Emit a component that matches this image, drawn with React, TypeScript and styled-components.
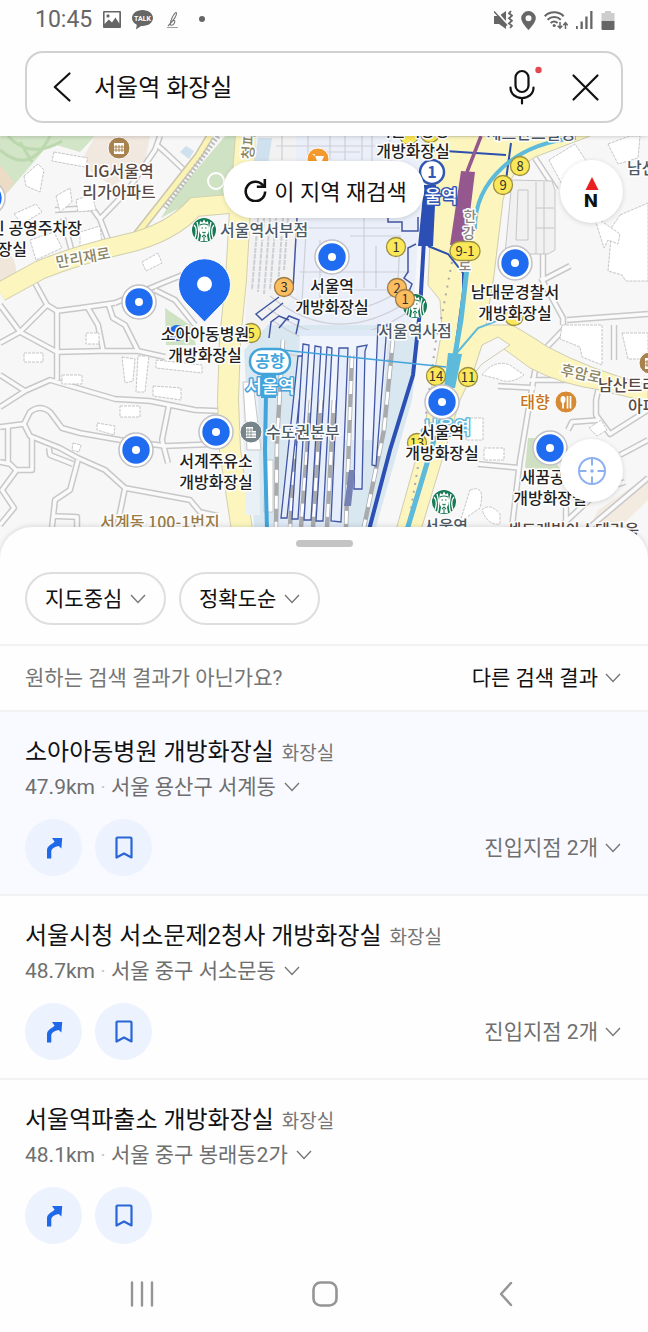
import React from "react";
import styled, { createGlobalStyle } from "styled-components";

const GlobalStyle = createGlobalStyle`
  *, *::before, *::after { box-sizing: border-box; }
  body {
    margin: 0;
    background: #fff;
    color: #111;
    font-family: Roboto, "Noto Sans CJK KR", sans-serif;
  }
  button, input, select { font: inherit; color: inherit; }
  button { margin: 0; padding: 0; border: 0; background: none; cursor: pointer; }
  h2, p, ul { margin: 0; padding: 0; font-weight: 400; }
  svg { display: block; flex: none; }
`;

const Page = styled.div`
  min-height: 100vh;
  display: flex;
  flex-direction: column;
  background: #fefefe;
`;

/* ---------- status bar ---------- */

const StatusBar = styled.div`
  display: flex;
  align-items: center;
  justify-content: space-between;
  height: 40px;
  padding: 0 33px 0 35px;
  color: #666;
`;

const StatusGroup = styled.div<{ $gap: number }>`
  display: flex;
  align-items: center;
  gap: ${(p) => p.$gap}px;
`;

const Clock = styled.span`
  font-size: 23px;
  line-height: 40px;
`;

/* ---------- search ---------- */

const SearchArea = styled.form`
  position: relative;
  z-index: 1;
  padding: 11px 25px 13px;
  background: #fefefe;
  box-shadow: 0 1px 4px rgba(0, 0, 0, 0.16);
  clip-path: inset(0 0 -6px 0);
`;

const SearchBox = styled.div`
  display: flex;
  align-items: center;
  height: 72px;
  padding: 0 18px 0 17px;
  border: 2px solid #d1d1d1;
  border-radius: 18px;
`;

const IconButton = styled.button`
  display: grid;
  place-items: center;
  width: 36px;
  height: 48px;

  svg { overflow: visible; }
`;

const SearchInput = styled.input`
  flex: 1;
  min-width: 0;
  height: 48px;
  margin: 0 14px;
  padding: 0 0 3px;
  border: 0;
  outline: 0;
  background: none;
  font-size: 24px;
`;

const SearchActions = styled.div`
  display: flex;
  gap: 27px;
`;

/* ---------- map ---------- */

const MapArea = styled.section`
  position: relative;
  height: 420px;
  overflow: hidden;
  background: #f7f7f7;
`;

const MapDrawing = styled.svg`
  width: 100%;
  height: 100%;
  font-family: "Noto Sans CJK KR", sans-serif;
`;

const ResearchButton = styled.button`
  position: absolute;
  top: 25px;
  left: 50%;
  transform: translateX(-50%);
  display: flex;
  align-items: center;
  justify-content: center;
  gap: 7px;
  height: 57px;
  padding: 0 18px 0 20px;
  border-radius: 29px;
  background: #fff;
  box-shadow: 0 1px 5px rgba(0, 0, 0, 0.15);
  font-size: 22px;
  white-space: nowrap;
`;

const RoundMapButton = styled.button<{ $top: number }>`
  position: absolute;
  top: ${(p) => p.$top}px;
  right: 25px;
  display: grid;
  place-items: center;
  width: 63px;
  height: 63px;
  border-radius: 50%;
  background: #fff;
  box-shadow: 0 1px 5px rgba(0, 0, 0, 0.15);
`;

/* ---------- result sheet ---------- */

const Sheet = styled.main`
  position: relative;
  flex: 1;
  margin-top: -29px;
  padding-top: 13px;
  border-radius: 32px 32px 0 0;
  background: #fefefe;
  box-shadow: 0 -1px 5px rgba(0, 0, 0, 0.12);
`;

const Handle = styled.div`
  width: 57px;
  height: 7px;
  margin: 0 auto;
  border-radius: 4px;
  background: #c4c4c4;
`;

const Filters = styled.div`
  display: flex;
  gap: 13px;
  padding: 25px 25px 19px;
  border-bottom: 2px solid #f2f2f3;
`;

const Chip = styled.label`
  display: flex;
  align-items: center;
  gap: 7px;
  height: 53px;
  padding: 0 18px;
  border: 2px solid #dedede;
  border-radius: 27px;
  font-size: 21px;
`;

const ChipSelect = styled.select`
  appearance: none;
  margin: 0;
  padding: 0;
  border: 0;
  outline: 0;
  background: none;
  line-height: 32px;
`;

const OtherResults = styled.div`
  display: flex;
  align-items: center;
  justify-content: space-between;
  height: 66px;
  padding: 0 27px 0 25px;
  border-bottom: 2px solid #f1f2f4;
  color: #757575;
  font-size: 21px;
  line-height: 32px;
`;

const MoreButton = styled.button<{ $dark?: boolean }>`
  display: flex;
  align-items: center;
  gap: 7px;
  color: ${(p) => (p.$dark ? "#111" : "#6f6f6f")};
  font-size: 21px;
  line-height: 32px;
`;

const List = styled.ul`
  list-style: none;
`;

const Item = styled.li<{ $active?: boolean }>`
  padding: 24px 27px 18px 25px;
  border-bottom: 2px solid #f1f2f4;
  background: ${(p) => (p.$active ? "#f9faff" : "transparent")};

  &:last-child {
    padding-bottom: 12px;
    border-bottom: 0;
  }
`;

const ItemHead = styled.div`
  display: flex;
  align-items: baseline;
  gap: 8px;
`;

const Title = styled.h2`
  font-size: 24px;
  line-height: 32px;
`;

const Category = styled.span`
  color: #757575;
  font-size: 19px;
`;

const Address = styled.button`
  display: flex;
  align-items: center;
  gap: 8px;
  margin-top: 4px;
  color: #6f6f6f;
  font-size: 21px;
  line-height: 30px;
`;

const Separator = styled.span`
  color: #c8c8c8;
`;

const ItemActions = styled.div`
  display: flex;
  align-items: center;
  gap: 13px;
  margin-top: 17px;
`;

const RoundAction = styled.button`
  display: grid;
  place-items: center;
  width: 57px;
  height: 57px;
  border-radius: 50%;
  background: #edf2ff;
`;

const Entrances = styled.div`
  margin-left: auto;
`;

const NavBar = styled.nav`
  position: relative;
  display: flex;
  align-items: center;
  justify-content: space-between;
  height: 76px;
  padding: 0 20%;
  background: #fefefe;
`;

const NavButton = styled.button`
  display: grid;
  place-items: center;
  width: 24px;
  height: 48px;
`;

/* ---------- icons ---------- */

const Chevron = ({ color = "#777" }: { color?: string }) => (
  <svg width="16" height="10" viewBox="0 0 16 10" fill="none" stroke={color} strokeWidth="1.4" aria-hidden="true">
    <path d="M1 1l7 7.4L15 1" />
  </svg>
);

const StatusLeft = () => (
  <StatusGroup $gap={10}>
    <Clock>10:45</Clock>
    <svg width="20" height="18" viewBox="0 0 20 18" fill="#666">
      <path
        fillRule="evenodd"
        d="M2 0h16a1 1 0 0 1 1 1v15a1 1 0 0 1-1 1H2a1 1 0 0 1-1-1V1a1 1 0 0 1 1-1zm.6 1.600v11.400l4.200-4.600 3.200 3.100 3.400-5 3.900 6V1.600zM6 3.300a1.600 1.600 0 1 1 0 3.200 1.600 1.600 0 0 1 0-3.200z"
      />
    </svg>
    <svg width="21" height="20" viewBox="0 0 21 20">
      <path d="M10.500 0C4.700 0 0 3.600 0 8c0 2.900 1.900 5.300 4.800 6.700L4 19.500l5-3.600 1.500.1C16.300 16 21 12.400 21 8s-4.700-8-10.500-8z" fill="#666" />
      <text x="10.500" y="11" fontSize="7" fontWeight="700" fontFamily="Roboto, sans-serif" fill="#fff" textAnchor="middle">
        TALK
      </text>
    </svg>
    <svg width="20" height="20" viewBox="0 0 20 20" fill="none" stroke="#777" strokeWidth="1.100">
      <path d="M5 16C9 12 14 6 13.500 3c-.6-1.700-3 1.500-4.500 5-1.200 3-2.600 6.600-1 7.200 1.800.6 4-2 3.800-4-.2-1.300-2-.8-3 .8" />
      <path d="M4 17.500h11" strokeWidth=".7" />
    </svg>
    <svg width="20" height="8" viewBox="0 0 20 8">
      <circle cx="9" cy="3" r="3" fill="#666" />
    </svg>
  </StatusGroup>
);

const StatusRight = () => (
  <StatusGroup $gap={8}>
    <svg width="19" height="20" viewBox="0 0 19 20" fill="none">
      <path d="M0 6h5l7-5v18l-7-5H0z" fill="#666" />
      <path d="M1 0l13 15" stroke="#fefefe" strokeWidth="2" />
      <path d="M0 1.500l13 14" stroke="#666" strokeWidth="1.500" />
      <path d="M17 1l-2 2.300 3 2.400-3 2.600 3 2.500-3 2.600 3 2.400-2 2.200" stroke="#666" strokeWidth="1.800" />
    </svg>
    <svg width="15" height="19" viewBox="0 0 15 19">
      <path fillRule="evenodd" d="M7.500 0A7.300 7.300 0 0 0 .2 7.300C.2 12 7.500 19 7.500 19s7.300-7 7.300-11.700A7.300 7.300 0 0 0 7.500 0zm0 4.200a3 3 0 1 1 0 6 3 3 0 0 1 0-6z" fill="#666" />
    </svg>
    <svg width="24" height="19" viewBox="0 0 24 19" fill="none" stroke="#666" strokeWidth="2">
      <path d="M.7 5.200a13.500 13.500 0 0 1 19 0M3.600 8.700a9.500 9.500 0 0 1 13.200 0M6.600 12a5.500 5.500 0 0 1 7 0" />
      <circle cx="10.200" cy="14.500" r="1.600" fill="#666" stroke="none" />
      <path d="M16 11v6M13.700 14.700l2.300 2.500 2.300-2.500M21.500 18v-6M19.300 14.200l2.200-2.500 2.200 2.500" strokeWidth="1.500" />
    </svg>
    <svg width="17" height="18" viewBox="0 0 17 18" fill="#666">
      <path d="M0 15h1.800v3H0zM4.500 10.500h2.300V18H4.500zM9.300 5.500h2.300V18H9.300zM14.200 0h2.300v18h-2.300z" />
    </svg>
    <svg width="14" height="19" viewBox="0 0 14 19">
      <path d="M4 0h6v2h3.500v8H.5V2H4z" fill="#cdcdcd" />
      <path d="M.5 10h13v8a1 1 0 0 1-1 1h-11a1 1 0 0 1-1-1z" fill="#666" />
    </svg>
  </StatusGroup>
);

const RouteIcon = () => (
  <svg width="18" height="22" viewBox="0 0 18 22" aria-hidden="true">
    <path d="M7 1H17.200L16.400 11.500 13.700 9C11.500 9.500 6.300 11 6.300 14.300V21.500H2V13.500C2 9.500 5.500 8 9.600 4.800z" fill="#1f68e8" />
  </svg>
);

const BookmarkIcon = () => (
  <svg width="18" height="23" viewBox="0 0 18 23" fill="none" stroke="#2a66d4" strokeWidth="2.200" strokeLinejoin="round" aria-hidden="true">
    <path d="M1.500 2.500a1 1 0 0 1 1-1h13a1 1 0 0 1 1 1v19L9 17.500l-7.500 4z" />
  </svg>
);

/* ---------- map drawing ---------- */

const STREETS = [
  "M0 375L25 391L0 407M25 391L50 380L115 399L150 401L170 405L195 410L218 411",
  "M57 380V311M0 343L20 332L57 352L100 351L138 351L165 357M20 332L0 305",
  "M35 283L47 305L57 311L80 308L115 303M47 305L20 332M88 308L98 325L103 350M108 303L113 318L125 325L138 351",
  "M115 303L165 282L195 270M155 290L175 300L195 325",
  "M0 427L24 424L30 412Q40 404 50 412L62 428L80 433L120 440L165 446L218 444",
  "M24 424L30 436L60 448L78 458L105 470L125 488L190 500L200 512L218 516M125 488L117 527",
  "M169 405L162 440L168 463M78 460L70 490L55 500L52 527M52 516L77 517V527M49 448L50 455L73 464",
  "M8 427V463M0 462L10 464L16 470L32 470V437M16 471L2 490L14 508L0 525",
  "M55 210L92 208L100 219L128 190L155 150L160 136M100 219L110 245M63 218L72 252",
  "M157 145L165 152L183 169",
  "M535 158L556 190M543 278V250M543 280L570 266M567 320L648 314M541 278L563 318V325",
  "M536 365L530 400L520 460L512 527M530 380L600 380M498 386L535 388M478 464L520 468",
  "M614 325V360M600 382L596 400V415L610 434L648 410M568 430L572 422L600 420",
  "M568 325L546 348M648 440L620 455M590 527L648 478M560 527L600 490L625 482M566 500V527",
];

const BUILDINGS = [
  "M54 152l34 6-3 9-33-6z",
  "M24 176l14-12 6 6-4 22-14-6z",
  "M56 196l14-8 2 14-12 10z",
  "M14 214l22-10 6 8-20 12z",
  "M76 200l16-6 4 16-18 2z",
  "M30 240l24-8 8 16-26 12z",
  "M80 232l20-6 2 18-22 6z",
  "M142 262l16-9 4 10-16 8z",
  "M86 333h13v11H86z",
  "M24 353h19v9H24z",
  "M122 357l13 2-2 22-8 2z",
  "M138 356h11l-4 36h-9z",
  "M156 360l46 5v8l-46-5z",
  "M153 386l28 2v12l-28-4z",
  "M120 406h20v11h-20z",
  "M97 423l18 3-1 9-17-5z",
  "M62 375h20v9H62z",
  "M73 443l8 2-2 7-7-2z",
  "M608 144l22-8h10l-2 22-20 6z",
  "M549 160l26-16 20 30-30 16z",
  "M620 215l28-12v78h-22l-4-6-14-4 4-44z",
  "M594 216l26 18-2 10-10-4-4 8z",
  "M562 325h40v40l-20-8-2-10-20-8z",
  "M622 333h26v26h-20z",
  "M482 375q12-16 28-10l14 10q-14 10-26 4z",
  "M484 448h20v12h-20z",
  "M466 418h17v22h-17z",
  "M482 510q8-8 18 4l0 10q-12 2-18-14z",
  "M470 490q16-6 10 18l-20 14z",
  "M589 428l12-8 6 10-10 6z",
];

const PLATFORMS = [
  "M298 356h6L287 518h-6z",
  "M303 344l6 1-11 174h-6z",
  "M315 346l6 1-10 173h-7z",
  "M327 347l5 1-9 173h-7z",
  "M339 348h9l-7 174-10-1z",
  "M357 347l10-2-2 6-3 138h-8z",
  "M378 325h9l-11 141-4-1z",
];

const TRACKS = [
  "M283 340L277 440L276 527",
  "M297 420L290 527",
  "M311 400L301 527",
  "M321 400L313 527",
  "M334 400L327 527",
  "M352 355L346 527",
  "M393 340L384 430L364 527",
];

type LabelProps = {
  x: number;
  y: number;
  color?: string;
  size?: number;
  anchor?: "start" | "middle" | "end";
  halo?: string;
  rotate?: number;
  children: React.ReactNode;
};

const MapLabel = ({ x, y, color = "#222", size = 16, anchor = "middle", halo = "#fff", rotate = 0, children }: LabelProps) => (
  <text
    x={x}
    y={y}
    fill={color}
    fontSize={size}
    fontWeight={500}
    textAnchor={anchor}
    stroke={halo}
    strokeWidth="3"
    strokeLinejoin="round"
    paintOrder="stroke"
    transform={rotate ? `rotate(${rotate} ${x} ${y})` : undefined}
  >
    {children}
  </text>
);

const Spot = ({ x, y }: { x: number; y: number }) => (
  <g>
    <circle cx={x} cy={y} r="17" fill="#fff" stroke="#c2c2c6" strokeWidth="1.500" />
    <circle cx={x} cy={y} r="13.700" fill="#206cf0" />
    <circle cx={x} cy={y} r="4" fill="#fff" />
  </g>
);

const Exit = ({ x, y, n, orange, wide }: { x: number; y: number; n?: string; orange?: boolean; wide?: boolean }) => (
  <g>
    <rect
      x={x - (wide ? 15 : 9.5)}
      y={y - 9.5}
      width={wide ? 30 : 19}
      height="19"
      rx="9.500"
      fill={orange ? "#fbbd5e" : "#fbe858"}
      stroke={orange ? "#9c7a48" : "#9c9040"}
      strokeWidth="1.300"
    />
    {n && (
      <text x={x} y={y + 5} fontSize="13" fill="#333" textAnchor="middle">
        {n}
      </text>
    )}
  </g>
);

const Coffee = ({ x, y }: { x: number; y: number }) => (
  <g transform={`translate(${x} ${y})`}>
    <circle r="12.500" fill="#fff" />
    <circle r="12" fill="#187a55" />
    <path d="M-9 8Q-6-1-10-5M-6.500 10Q-4 2-7-8M9 8Q6-1 10-5M6.500 10Q4 2 7-8" fill="none" stroke="#fff" strokeWidth="1.300" />
    <path d="M-4.500-5L-4-9-1.800-7.500 0-10.500 1.800-7.500 4-9 4.500-5Q6 1 3 5L4 11H-4L-3 5Q-6 1-4.500-5z" fill="#fff" />
    <path d="M-2.500-2h1.500M1-2h1.500M-1.500 2Q0 3.500 1.500 2M-2 7L0 5 2 7M-4-5Q0-7 4-5M0 7v4" fill="none" stroke="#187a55" strokeWidth="1.100" />
  </g>
);

const Place = ({ x, y, r, fill, children }: { x: number; y: number; r: number; fill: string; children?: React.ReactNode }) => (
  <g transform={`translate(${x} ${y})`}>
    <circle r={r} fill={fill} stroke="#fff" strokeWidth="1" />
    {children}
  </g>
);

const Building = () => (
  <>
    <path d="M-5-5H5V6H-5z" fill="#fff" />
    <path d="M-3-3v7M0-3v7M3-3v7M-5-1H5M-5 2H5" stroke="#a8834f" strokeWidth="1" />
  </>
);

const CityMap = () => (
  <MapDrawing viewBox="0 136 648 420" preserveAspectRatio="xMidYMin slice" role="img" aria-label="서울역 주변 지도">
    <rect y="136" width="648" height="420" fill="#f7f7f7" />

    <path d="M0 136H95L80 152 53 144 44 150 8 192 0 188z" fill="#d2e5c6" />
    <path d="M0 165L14 182 5 196 0 192z" fill="#ecdcc5" />
    <path d="M8 136Q30 160 62 141M0 150Q30 176 50 136M20 142l12 20" fill="none" stroke="#bcd8ae" strokeWidth="3" />
    <path d="M95 136H150L144 168 112 186 80 164z" fill="#f1e8df" />
    <path d="M0 246Q18 256 16 276L0 285z" fill="#f0e6da" />
    <path d="M237 136V200L207 197Q185 204 161 218L176 194 225 136z" fill="#cfe2c4" />
    <path d="M165 308L190 325 196 345H166z" fill="#cfe2c4" />
    <path d="M180 152l6-6 8 5-5 8z" fill="#cfe0ef" />
    <path d="M528 438H545L560 470 525 468z" fill="#cfe0c2" />
    <path d="M598 510L648 476V500L620 527H590z" fill="#f3ebe0" />

    <g fill="none" strokeLinejoin="round">
      {STREETS.map((d) => (
        <path key={d} d={d} stroke="#c8c8ca" strokeWidth="6.500" />
      ))}
      {STREETS.map((d) => (
        <path key={d} d={d} stroke="#fafafa" strokeWidth="3.500" />
      ))}
    </g>
    <g fill="#fff" stroke="#c6c6c8" strokeWidth="1" strokeDasharray="3 1">
      {BUILDINGS.map((d) => (
        <path key={d} d={d} />
      ))}
    </g>
    <g fill="#f1f1f2" stroke="#c6c6c8" strokeWidth="1">
      <path d="M512 180L552 181 555 190V250L548 254H505z" />
      <path d="M518 190h10v50h-12zM536 182v72M544 182v72M536 208h18M536 228h18" />
    </g>

    {/* minor and major yellow roads */}
    <g fill="none">
      <path d="M132 240L198 156 210 136" stroke="#c9c6ad" strokeWidth="8" />
      <path d="M132 240L198 156 210 136" stroke="#fbf3b4" strokeWidth="5" />
      <path d="M218 136L165 208" stroke="#bdbdbd" strokeWidth="5" strokeDasharray="2 2" />
      <path d="M0 292L40 270Q80 254 125 244T195 207L240 203" stroke="#d2cfae" strokeWidth="20" />
      <path d="M246 136L240 210 236 280 230 340 228 400 230 450 242 530" stroke="#d2cfae" strokeWidth="22" />
      <path d="M0 292L40 270Q80 254 125 244T195 207L240 203" stroke="#fcf6be" strokeWidth="18" />
      <path d="M246 136L240 210 236 280 230 340 228 400 230 450 242 530" stroke="#fcf6be" strokeWidth="20" />
    </g>

    {/* station yard */}
    <path d="M256 136H300V320L262 345H244L250 240z" fill="#f2f2f3" />
    <path d="M258 138h14l-4 26h-14z" fill="#cfe0ef" />
    <path d="M296 136H425L412 330H264L296 296z" fill="#ebeff9" />
    <path d="M244 350L268 325H440L424 400 380 527H254z" fill="#d9e7f1" />
    <path d="M425 290L440 330 430 400 396 527H376L412 400z" fill="#f7f7f7" />
    <g fill="none" stroke="#cdcfd6" strokeWidth="1.200">
      <path d="M258 218L252 290M264 218L258 292M270 218L264 294M276 218L270 290M283 218L278 285M288 218L284 270" strokeWidth="2" strokeDasharray="5 1" />
      <path d="M282 136v24M308 136v24M330 136v24M345 136v24M362 136v24M276 146h99M372 136v26M390 140v24M310 152h50" />
      <path d="M300 228h100M306 232l-4 70M320 240v60M350 236h50l-3 70M364 218v70M376 246v42M300 272h110M312 290h94" />
      <path d="M270 296Q336 350 410 300M268 308Q336 360 408 312M272 320Q336 368 404 322M285 292Q336 330 398 292" />
      <path d="M266 350l32 6 94 4" strokeWidth="1.500" />
    </g>
    <path d="M300 330H392L370 420 345 527H278z" fill="#dfe9f7" />
    <path d="M300 336L388 336 380 440 296 440z" fill="#f0f4fd" />

    <g fill="none">
      {TRACKS.map((d) => (
        <path key={d} d={d} stroke="#a9aaac" strokeWidth="4.500" />
      ))}
      {TRACKS.map((d) => (
        <path key={d} d={d} stroke="#fff" strokeWidth="3" strokeDasharray="13 13" />
      ))}
    </g>
    <g fill="#e6eefb" stroke="#4256a2" strokeWidth="1.300">
      {PLATFORMS.map((d) => (
        <path key={d} d={d} />
      ))}
      <path d="M349 470h6l-4 36h-7z" fill="#7481b2" stroke="none" />
    </g>
    <g fill="none" stroke="#4256a2" strokeWidth="1.500">
      <path d="M297 218L293 290M279 297L256 314 262 320 283 303M269 338l2-16 8-6 10 4M279 328l10-12 10 4-3 14" />
      <path d="M388 218v4h14v9h16v-14M416 244l-8 4v24l-4 6 8 6-8 20" />
    </g>
    <path d="M242 385h16l2 130h-14z" fill="#e9f0f6" />
    <path d="M243 382h10l8 68h-14zM265 460h8v52h-9z" fill="#fff" stroke="#c6c6c8" />

    {/* wide road on the east side */}
    <path
      d="M425 136H590L535 157Q508 172 503 200L494 275 486 325H512Q535 338 546 346 590 370 648 385V402L600 390Q560 384 530 368L500 346 480 358 460 400 421 530H396L424 430 442 330 440 300 428 285 430 240z"
      fill="#fcf6be"
      stroke="#cfccb0"
      strokeWidth="1"
    />
    <path d="M482 345L498 337 510 345 482 364 472 376z" fill="#f7f7f7" stroke="#cfccb0" />
    <path d="M452 262L441 320 436 340 424 430 408 527" fill="none" stroke="#aaa" strokeWidth="2" strokeDasharray="2 6" />

    {/* subway lines */}
    <g fill="none">
      <path d="M430 150L506 155M511 143L506 180M428 246L448 254 463 273V292L455 350" stroke="#2d4fae" strokeWidth="2" />
      <path d="M424 240L420 310 413 375 390 450 369 530" stroke="#2b4fb4" strokeWidth="4" />
      <path d="M576 138Q530 142 502 168T475 230" stroke="#5dbadb" strokeWidth="4" />
      <path d="M467 268L461 320 455 355M448 400L434 440 407 530" stroke="#5dbadb" strokeWidth="5" />
      <path d="M455 355L478 328 512 315" stroke="#5dbadb" strokeWidth="2" />
      <path d="M282 350L446 367" stroke="#42a4db" strokeWidth="1.500" />
      <path d="M266 395L265 450 267 530" stroke="#42a4db" strokeWidth="4" />
      <path d="M481 136L467 172" stroke="#94588e" strokeWidth="3.500" />
    </g>
    <path d="M461 171L475 172 466 245H450z" fill="#94588e" />
    <path d="M424 185H436L433 246H418z" fill="#2b4fb4" />
    <path d="M448 353L462 354 455 388H444z" fill="#5dbadb" />
    <path d="M261 372H276V398H261z" fill="#42a4db" />

    <circle cx="216" cy="181" r="8" fill="none" stroke="#fff" strokeWidth="2" />

    {/* street names */}
    <MapLabel x={84} y={263} size={15} color="#8d8664" rotate={-10}>만리재로</MapLabel>
    <MapLabel x={580} y={379} size={15} color="#8d8664" rotate={12}>후암로</MapLabel>
    <MapLabel x={470} y={221} size={14} color="#8d8680">한</MapLabel>
    <MapLabel x={469} y={238} size={14} color="#8d8680">강</MapLabel>
    <MapLabel x={465} y={270} size={14} color="#8d8680">로</MapLabel>
    <MapLabel x={254} y={146} size={15} color="#8d8664" rotate={-86}>청파</MapLabel>

    {/* exits */}
    <Exit x={409} y={135} />
    <Exit x={430} y={133} />
    <Exit x={520} y={166} n="8" />
    <Exit x={503} y={185} n="9" />
    <Exit x={465} y={251} n="9-1" wide />
    <Exit x={396} y={247} n="1" />
    <Exit x={436} y={376} n="14" />
    <Exit x={468} y={377} n="11" />
    <Exit x={251} y={333} n="5" />
    <Exit x={417} y={443} n="13" />
    <Exit x={514} y={316} />
    <Exit x={284} y={287} n="3" orange />

    {/* places */}
    <Place x={119} y={148} r={11} fill="#a8834f"><Building /></Place>
    <Place x={650} y={363} r={11} fill="#a8834f"><Building /></Place>
    <Place x={251} y={432} r={11} fill="#77858b">
      <path d="M-5-5H2V6H-5zM2-1H5V6H2z" fill="#fff" />
      <path d="M-3-4v9M0-4v9M-5-2H2M-5 1H5M-5 4H5" stroke="#77858b" strokeWidth=".8" />
    </Place>
    <Place x={318} y={159} r={11} fill="#f49a2d">
      <path d="M-6-5h2.500L-1 2H4L6-3H-3z" fill="#fff" />
    </Place>
    <Place x={566} y={402} r={11} fill="#d58a33">
      <ellipse cx="-3" cy="-2.500" rx="2.500" ry="3.500" fill="#fff" />
      <path d="M-3 0V6.500M1.500-6V6.500M4.500-6V6.500" stroke="#fff" strokeWidth="1.700" />
    </Place>
    <Coffee x={204} y={230} />
    <Coffee x={415} y={306} />
    <Coffee x={444} y={502} />
    <Exit x={397} y={288} n="2" orange />
    <Exit x={405} y={299} n="1" orange />

    <MapLabel x={119} y={177} color="#594841">LIG서울역</MapLabel>
    <MapLabel x={119} y={198} color="#594841">리가아파트</MapLabel>
    <MapLabel x={220} y={236} anchor="start" color="#4c5a65">서울역서부점</MapLabel>
    <MapLabel x={415} y={337} color="#4c5a65">서울역사점</MapLabel>
    <MapLabel x={266} y={438} anchor="start" color="#4c5a65">수도권본부</MapLabel>
    <MapLabel x={160} y={528} color="#9a7c46">서계동 100-1번지</MapLabel>
    <MapLabel x={535} y={408} color="#c67518">태향</MapLabel>
    <MapLabel x={598} y={391} anchor="start" color="#594841">남산트라</MapLabel>
    <MapLabel x={628} y={412} anchor="start" color="#594841">아파</MapLabel>
    <MapLabel x={627} y={174} anchor="start" color="#4c5a65">남산</MapLabel>
    <MapLabel x={573} y={536} color="#594841">센트레빌아스테리움</MapLabel>
    <MapLabel x={446} y={532} color="#4c5a65">서울역</MapLabel>
    <MapLabel x={531} y={139} color="#4c5a65">세브란스빌딩</MapLabel>

    {/* station badges */}
    <MapLabel x={441} y={203} size={18} color="#fff" halo="#3157b5">울역</MapLabel>
    <circle cx="432" cy="172" r="12" fill="#fff" stroke="#3157b5" strokeWidth="2.500" />
    <text x="432" y="178" fontSize="16" fontWeight="700" fill="#3157b5" textAnchor="middle">1</text>
    <MapLabel x={446} y={434} size={18} color="#fff" halo="#5dbadb">서울역</MapLabel>
    <MapLabel x={270} y={393} size={18} color="#fff" halo="#42a4db">서울역</MapLabel>
    <rect x="250" y="349" width="40" height="25" rx="12" fill="#fff" stroke="#42a4db" strokeWidth="2.500" />
    <text x="270" y="367" fontSize="16" fontWeight="700" fill="#42a4db" textAnchor="middle">공항</text>

    {/* restroom results */}
    <Spot x={-12} y={198} />
    <Spot x={332} y={257} />
    <Spot x={515} y={263} />
    <Spot x={139} y={302} />
    <Spot x={136} y={450} />
    <Spot x={216} y={432} />
    <Spot x={442} y={402} />
    <Spot x={550} y={448} />
    <circle cx="177" cy="333" r="8" fill="#206cf0" />
    <path d="M204.500 322L186 303A26 26 0 1 1 223 303z" fill="#206cf0" stroke="#fff" strokeWidth="1" />
    <circle cx="204.500" cy="284" r="7.500" fill="#fff" />

    <MapLabel x={413} y={136}>서울역광장</MapLabel>
    <MapLabel x={413} y={157}>개방화장실</MapLabel>
    <MapLabel x={82} y={234} anchor="end">인 공영주차장</MapLabel>
    <MapLabel x={27} y={255} anchor="end">장실</MapLabel>
    <MapLabel x={332} y={292}>서울역</MapLabel>
    <MapLabel x={332} y={313}>개방화장실</MapLabel>
    <MapLabel x={515} y={298}>남대문경찰서</MapLabel>
    <MapLabel x={515} y={319}>개방화장실</MapLabel>
    <MapLabel x={205} y={340}>소아아동병원</MapLabel>
    <MapLabel x={205} y={361}>개방화장실</MapLabel>
    <MapLabel x={216} y={467}>서계주유소</MapLabel>
    <MapLabel x={216} y={488}>개방화장실</MapLabel>
    <MapLabel x={442} y={438}>서울역</MapLabel>
    <MapLabel x={442} y={459}>개방화장실</MapLabel>
    <MapLabel x={550} y={483}>새꿈공원</MapLabel>
    <MapLabel x={550} y={504}>개방화장실</MapLabel>
  </MapDrawing>
);

/* ---------- data ---------- */

const RESULTS = [
  { name: "소아아동병원 개방화장실", distance: "47.9km", address: "서울 용산구 서계동", entrances: 2 },
  { name: "서울시청 서소문제2청사 개방화장실", distance: "48.7km", address: "서울 중구 서소문동", entrances: 2 },
  { name: "서울역파출소 개방화장실", distance: "48.1km", address: "서울 중구 봉래동2가", entrances: 0 },
];

export default function App() {
  return (
    <Page>
      <GlobalStyle />
      <StatusBar>
        <StatusLeft />
        <StatusRight />
      </StatusBar>

      <SearchArea onSubmit={(e) => e.preventDefault()}>
        <SearchBox>
          <IconButton type="button" aria-label="뒤로">
            <svg width="18" height="30" viewBox="0 0 18 30" fill="none" stroke="#111" strokeWidth="2.200" strokeLinecap="round" strokeLinejoin="round">
              <path d="M16.500 1.500L1.800 15l14.700 13.500" />
            </svg>
          </IconButton>
          <SearchInput aria-label="장소 검색" defaultValue="서울역 화장실" />
          <SearchActions>
            <IconButton type="button" aria-label="음성 검색">
              <svg width="36" height="40" viewBox="0 0 36 40" fill="none" stroke="#111" strokeWidth="2.200" strokeLinecap="round">
                <rect x="11.500" y="4" width="13" height="21" rx="6.500" />
                <path d="M6.500 20.500c0 6.500 5 10.500 11.500 10.500S29.500 27 29.500 20.500M18 31V36.500" />
                <circle cx="34.500" cy="3" r="3.200" fill="#e5484f" stroke="none" />
              </svg>
            </IconButton>
            <IconButton type="button" aria-label="지우기">
              <svg width="27" height="27" viewBox="0 0 27 27" fill="none" stroke="#111" strokeWidth="2.200" strokeLinecap="round">
                <path d="M1.500 1.500l24 24M25.500 1.500l-24 24" />
              </svg>
            </IconButton>
          </SearchActions>
        </SearchBox>
      </SearchArea>

      <MapArea>
        <CityMap />
        <ResearchButton type="button">
          <svg width="24" height="24" viewBox="0 0 24 24" fill="none" stroke="#111" strokeWidth="2.600">
            <path d="M20.300 8.200A9.700 9.700 0 1 0 21.800 13.500" />
            <path d="M21.500 1v7.700H13.500" />
          </svg>
          이 지역 재검색
        </ResearchButton>
        <RoundMapButton type="button" $top={24} aria-label="북쪽 방향">
          <svg width="20" height="34" viewBox="0 0 20 34">
            <path d="M10 2l6.500 13h-13z" fill="#e8201f" />
            <text x="9" y="32" fontSize="18" fontWeight="800" fontFamily="Inter, sans-serif" fill="#111" textAnchor="middle">
              N
            </text>
          </svg>
        </RoundMapButton>
        <RoundMapButton type="button" $top={303} aria-label="현재 위치">
          <svg width="30" height="30" viewBox="0 0 30 30" fill="none" stroke="#8db0f2" strokeWidth="2">
            <circle cx="15" cy="15" r="13" />
            <path d="M15 2v7.500M15 20.500V28M2 15h7.500M20.500 15H28" />
            <circle cx="15" cy="15" r="1.800" fill="#8db0f2" stroke="none" />
          </svg>
        </RoundMapButton>
      </MapArea>

      <Sheet>
        <Handle />
        <Filters>
          <Chip>
            <ChipSelect aria-label="검색 기준">
              <option>지도중심</option>
              <option>내위치순</option>
            </ChipSelect>
            <Chevron />
          </Chip>
          <Chip>
            <ChipSelect aria-label="정렬">
              <option>정확도순</option>
              <option>거리순</option>
            </ChipSelect>
            <Chevron />
          </Chip>
        </Filters>
        <OtherResults>
          <p>원하는 검색 결과가 아닌가요?</p>
          <MoreButton type="button" $dark>
            다른 검색 결과 <Chevron />
          </MoreButton>
        </OtherResults>
        <List>
          {RESULTS.map((r, i) => (
            <Item key={r.name} $active={i === 0}>
              <ItemHead>
                <Title>{r.name}</Title>
                <Category>화장실</Category>
              </ItemHead>
              <Address type="button">
                <span>
                  {r.distance} <Separator>·</Separator> {r.address}
                </span>
                <Chevron />
              </Address>
              <ItemActions>
                <RoundAction type="button" aria-label="길찾기">
                  <RouteIcon />
                </RoundAction>
                <RoundAction type="button" aria-label="저장">
                  <BookmarkIcon />
                </RoundAction>
                {r.entrances > 0 && (
                  <Entrances>
                    <MoreButton type="button">
                      진입지점 {r.entrances}개 <Chevron />
                    </MoreButton>
                  </Entrances>
                )}
              </ItemActions>
            </Item>
          ))}
        </List>
      </Sheet>

      <NavBar>
        <NavButton type="button" aria-label="최근 앱">
          <svg width="24" height="26" viewBox="0 0 24 26" stroke="#959595" strokeWidth="2.400" strokeLinecap="round">
            <path d="M2 1.500v23M12 1.500v23M22 1.500v23" />
          </svg>
        </NavButton>
        <NavButton type="button" aria-label="홈">
          <svg width="26" height="26" viewBox="0 0 26 26" fill="none" stroke="#959595" strokeWidth="2.600">
            <rect x="1.500" y="1.500" width="23" height="23" rx="7" />
          </svg>
        </NavButton>
        <NavButton type="button" aria-label="이전">
          <svg width="14" height="26" viewBox="0 0 14 26" fill="none" stroke="#959595" strokeWidth="2.400" strokeLinecap="round" strokeLinejoin="round">
            <path d="M12 2L2 13l10 11" />
          </svg>
        </NavButton>
      </NavBar>
    </Page>
  );
}
